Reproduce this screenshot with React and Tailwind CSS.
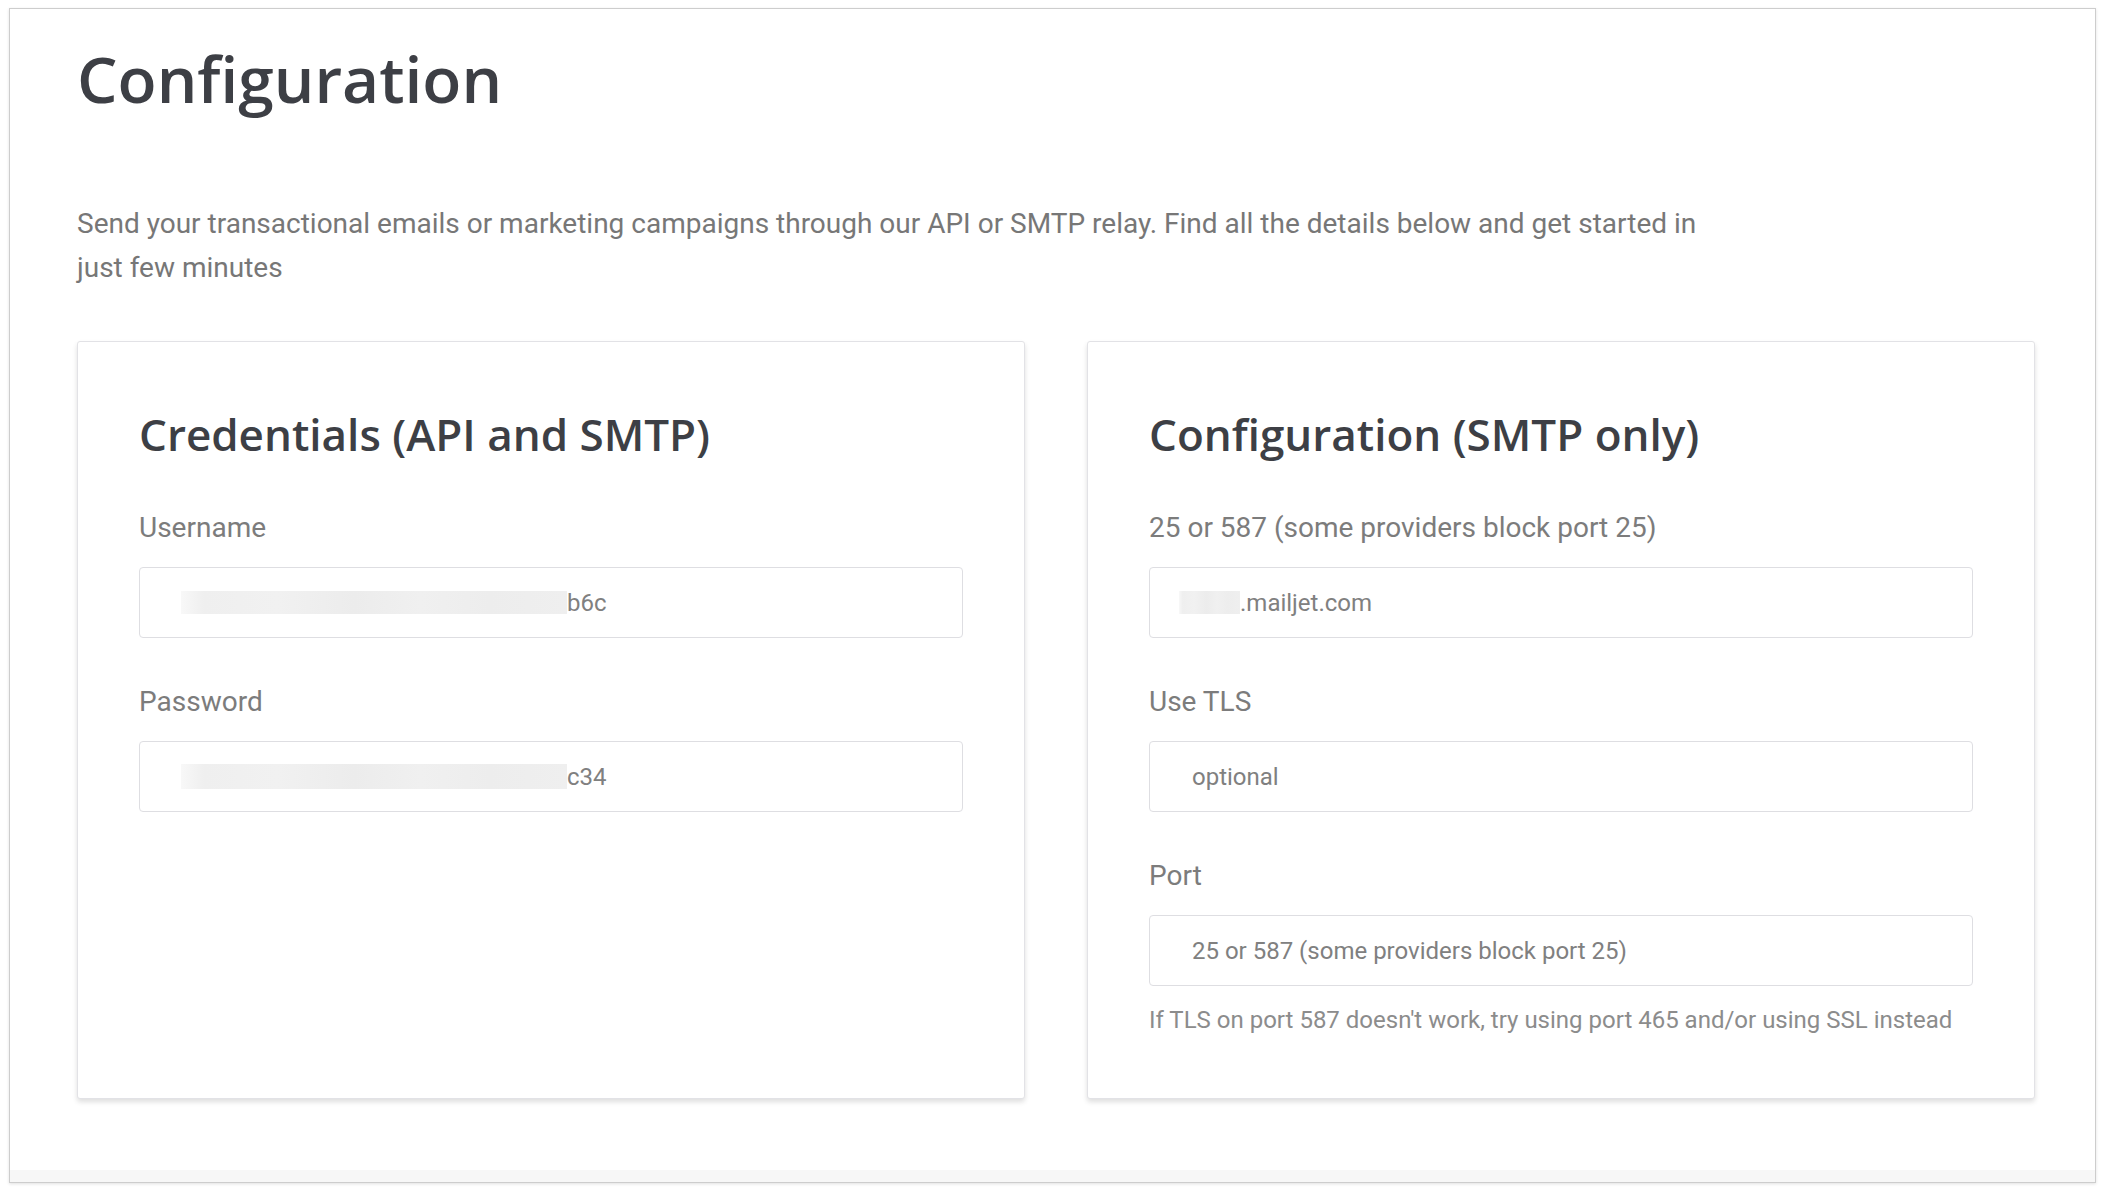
import React from "react";

const heading = "font-['Open_Sans',sans-serif] font-semibold text-[#3d3f45]";
const body = "font-['Roboto',sans-serif]";

// blurred redaction block used in the credential fields
const Redacted = ({ className }) => (
  <span
    className={`inline-block bg-[linear-gradient(90deg,#f8f8f8_0%,#efefef_6%,#f1f1f1_25%,#ececec_45%,#f0f0f0_62%,#ededed_80%,#efefef_100%)] ${className}`}
  />
);

const Field = ({ label, children }) => (
  <div className="mt-[44px]">
    <div className={`${body} text-[28px] leading-[40px] text-[#7c7c7c]`}>{label}</div>
    <div className="mt-[19px] h-[71px] rounded-[4px] border border-[#dedee2] bg-white flex items-center">
      {children}
    </div>
  </div>
);

const InputText = ({ children, className = "" }) => (
  <span className={`${body} text-[24px] leading-[30px] text-[#808080] ${className}`}>{children}</span>
);

const Card = ({ title, children }) => (
  <div className="rounded-[3px] border border-[#e2e2e6] bg-white shadow-[0_3px_5px_rgba(0,0,0,0.13)] px-[61px] pt-[62px] pb-[62px]">
    <h2 className={`${heading} text-[44px] leading-[60px]`}>{title}</h2>
    {children}
  </div>
);

export default function App() {
  return (
    <div className="min-h-[1192px] w-[2106px] bg-white pl-[9px] pr-[10px] pt-[8px]">
      <div className="border border-[#cdcdcd] shadow-[0_1px_3px_rgba(0,0,0,0.12)] bg-white">
        <div className="pl-[67px] pr-[60px] pt-[30px]">
          {/* Page title */}
          <h1 className={`${heading} text-[64px] leading-[80px]`}>Configuration</h1>

          <p className={`${body} mt-[83px] max-w-[1650px] text-[28px] leading-[44px] text-[#777777]`}>
            Send your transactional emails or marketing campaigns through our API or SMTP relay. Find all
            the details below and get started in just few minutes
          </p>

          {/* Cards */}
          <div className="mt-[51px] grid grid-cols-2 gap-[62px]">
            <Card title="Credentials (API and SMTP)">
              <Field label="Username">
                <div className="pl-[41px] flex items-center">
                  <Redacted className="w-[386px] h-[23px]" />
                  <InputText>b6c</InputText>
                </div>
              </Field>
              <Field label="Password">
                <div className="pl-[41px] flex items-center">
                  <Redacted className="w-[386px] h-[25px]" />
                  <InputText>c34</InputText>
                </div>
              </Field>
            </Card>

            <Card title="Configuration (SMTP only)">
              <Field label="25 or 587 (some providers block port 25)">
                <div className="pl-[29px] flex items-center">
                  <Redacted className="w-[61px] h-[23px]" />
                  <InputText>.mailjet.com</InputText>
                </div>
              </Field>
              <Field label="Use TLS">
                <InputText className="pl-[42px] text-[#8a8a8a]">optional</InputText>
              </Field>
              <Field label="Port">
                <InputText className="pl-[42px] text-[#8a8a8a]">25 or 587 (some providers block port 25)</InputText>
              </Field>
              <p className={`${body} mt-[18px] text-[24px] leading-[32px] text-[#8c8c8c]`}>
                If TLS on port 587 doesn't work, try using port 465 and/or using SSL instead
              </p>
            </Card>
          </div>
        </div>
        <div className="mt-[71px] h-[12px] bg-[#f7f7f7]" />
      </div>
    </div>
  );
}
